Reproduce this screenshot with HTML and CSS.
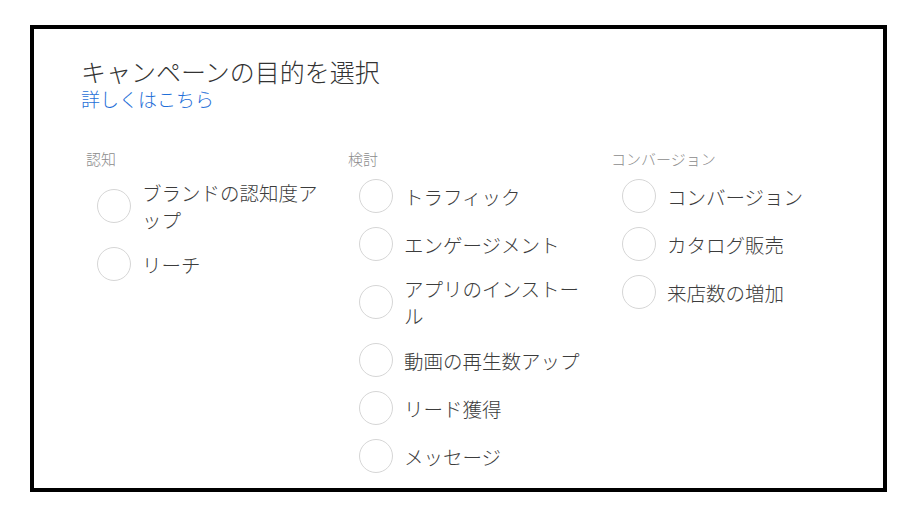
FILE: index.html
```html
<!DOCTYPE html>
<html>
<head>
  <meta charset="utf-8">
  <title>キャンペーンの目的を選択</title>
  <link rel="stylesheet" href="styles.css">
</head>
<body>
  <div class="panel">
    <h2 class="title">キャンペーンの目的を選択</h2>
    <a class="more" href="#">詳しくはこちら</a>

    <div class="columns">
      <div class="group">
        <div class="group-name">認知</div>
        <label class="option"><span class="radio"></span><span class="text">ブランドの認知度アップ</span></label>
        <label class="option"><span class="radio"></span><span class="text">リーチ</span></label>
      </div>
      <div class="group">
        <div class="group-name">検討</div>
        <label class="option"><span class="radio"></span><span class="text">トラフィック</span></label>
        <label class="option"><span class="radio"></span><span class="text">エンゲージメント</span></label>
        <label class="option"><span class="radio"></span><span class="text">アプリのインストール</span></label>
        <label class="option"><span class="radio"></span><span class="text">動画の再生数アップ</span></label>
        <label class="option"><span class="radio"></span><span class="text">リード獲得</span></label>
        <label class="option"><span class="radio"></span><span class="text">メッセージ</span></label>
      </div>
      <div class="group">
        <div class="group-name">コンバージョン</div>
        <label class="option"><span class="radio"></span><span class="text">コンバージョン</span></label>
        <label class="option"><span class="radio"></span><span class="text">カタログ販売</span></label>
        <label class="option"><span class="radio"></span><span class="text">来店数の増加</span></label>
      </div>
    </div>
  </div>
</body>
</html>
```

FILE: styles.css
```css
body {
  margin: 0;
  background: #fff;
  font-family: "Noto Sans CJK JP", "Noto Sans", sans-serif;
  font-weight: 300;
}

.panel {
  box-sizing: border-box;
  width: 857px;
  height: 467px;
  margin: 25px 0 0 30px;
  padding: 27px 0 0 47px;
  border: 4px solid #000;
}

.title {
  margin: 0;
  font-size: 25px;
  line-height: 31px;
  font-weight: 300;
  color: #333;
}

.more {
  display: block;
  font-size: 19px;
  line-height: 24px;
  color: #1f6fd8;
  text-decoration: none;
}

.columns {
  display: grid;
  grid-template-columns: 262px 263px 262px;
  margin: 38px 0 0 5px;
}

.group {
  display: flex;
  flex-direction: column;
  gap: 14px;
}

.group-name {
  font-size: 15px;
  line-height: 20px;
  color: #8c8c8c;
  margin-bottom: -4px;
}

.option {
  display: flex;
  align-items: center;
  gap: 11px;
  padding-left: 11px;
  cursor: pointer;
}

.radio {
  flex: none;
  box-sizing: border-box;
  width: 34px;
  height: 34px;
  border: 1px solid #d6d6d6;
  border-radius: 50%;
}

.text {
  width: 188px;
  font-size: 19.5px;
  line-height: 27px;
  color: #3c3c3c;
}
```
